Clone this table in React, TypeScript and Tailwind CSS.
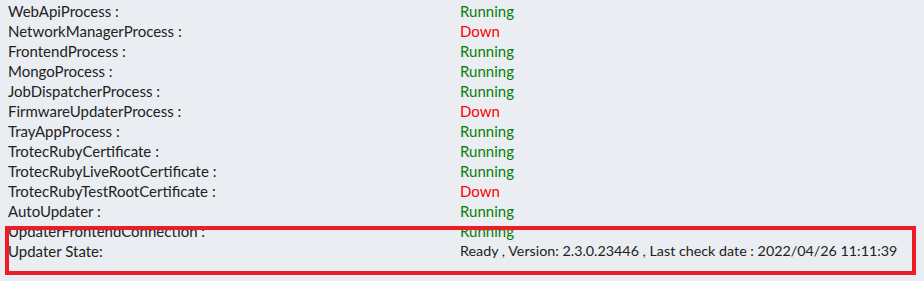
import React from "react";

const rows: [string, string][] = [
  ["WebApiProcess :", "Running"],
  ["NetworkManagerProcess :", "Down"],
  ["FrontendProcess :", "Running"],
  ["MongoProcess :", "Running"],
  ["JobDispatcherProcess :", "Running"],
  ["FirmwareUpdaterProcess :", "Down"],
  ["TrayAppProcess :", "Running"],
  ["TrotecRubyCertificate :", "Running"],
  ["TrotecRubyLiveRootCertificate :", "Running"],
  ["TrotecRubyTestRootCertificate :", "Down"],
  ["AutoUpdater :", "Running"],
  ["UpdaterFrontendConnection :", "Running"],
];

export default function App() {
  return (
    <div
      className="relative w-[924px] h-[281px] bg-[#eaeef2] overflow-hidden pt-[1px] pl-[8px] text-[15px] text-[#222]"
      style={{ fontFamily: "Lato, 'Noto Sans', sans-serif" }}
    >
      {rows.map(([k, v]) => (
        <div key={k} className="flex h-[20px] items-center leading-[20px]">
          <div className="w-[452px]">{k}</div>
          <div className={v === "Down" ? "text-[#ff0000]" : "text-[#0a7d0a]"}>{v}</div>
        </div>
      ))}
      <div className="flex h-[20px] items-center leading-[20px]">
        <div className="w-[452px]">Updater State:</div>
        <div className="text-[14.3px]">Ready , Version: 2.3.0.23446 , Last check date : 2022/04/26 11:11:39</div>
      </div>
      <div className="absolute left-[5px] top-[226px] w-[911px] h-[49px] border-[4px] border-[#ee1c25]" />
    </div>
  );
}
